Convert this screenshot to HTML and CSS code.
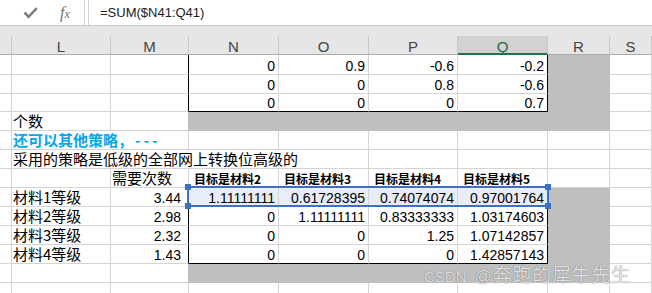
FILE: index.html
```html
<!DOCTYPE html>
<html lang="zh-CN">
<head>
<meta charset="utf-8">
<title>Sheet</title>
<link rel="stylesheet" href="styles.css">
</head>
<body>
<div class="app">
  <div class="fbar">
    <div class="fbtns">
      <svg class="check" width="15" height="12" viewBox="0 0 15 12"><polyline points="1.5,5.5 5.5,9.8 13.8,1.2" fill="none" stroke="#808080" stroke-width="2.6" stroke-linejoin="miter"/></svg>
      <span class="fx"><i class="fx-f">f</i><i class="fx-x">x</i></span>
    </div>
    <div class="fgap"></div>
    <div class="finput">=SUM($N41:Q41)</div>
  </div>

  <div class="colhdr">
    <div class="hc"></div>
    <div class="hc">L</div>
    <div class="hc">M</div>
    <div class="hc">N</div>
    <div class="hc">O</div>
    <div class="hc">P</div>
    <div class="hc act">Q</div>
    <div class="hc">R</div>
    <div class="hc">S</div>
  </div>

  <div class="sheet">
    <!-- row 1 -->
    <div class="c"></div><div class="c"></div><div class="c br"></div>
    <div class="c num">0</div><div class="c num">0.9</div><div class="c num">-0.6</div><div class="c num br">-0.2</div>
    <div class="c g"></div><div class="c"></div>
    <!-- row 2 -->
    <div class="c"></div><div class="c"></div><div class="c br"></div>
    <div class="c num">0</div><div class="c num">0</div><div class="c num">0.8</div><div class="c num br">-0.6</div>
    <div class="c g"></div><div class="c"></div>
    <!-- row 3 -->
    <div class="c"></div><div class="c"></div><div class="c br"></div>
    <div class="c num bb">0</div><div class="c num bb">0</div><div class="c num bb">0</div><div class="c num bb br">0.7</div>
    <div class="c g"></div><div class="c"></div>
    <!-- row 4 -->
    <div class="c"></div><div class="c txt">个数</div><div class="c brg"></div>
    <div class="c g"></div><div class="c g"></div><div class="c g"></div><div class="c g"></div><div class="c g"></div>
    <div class="c"></div>
    <!-- row 5 -->
    <div class="c"></div><div class="c txt cyan span2">还可以其他策略，<span class="dash">---</span></div>
    <div class="c"></div><div class="c"></div><div class="c"></div><div class="c"></div><div class="c"></div><div class="c"></div>
    <!-- row 6 -->
    <div class="c"></div><div class="c txt span4">采用的策略是低级的全部网上转换位高级的</div>
    <div class="c"></div><div class="c"></div><div class="c"></div><div class="c"></div>
    <!-- row 7 -->
    <div class="c"></div><div class="c"></div><div class="c txt">需要次数</div>
    <div class="c hd">目标是材料2</div><div class="c hd">目标是材料3</div><div class="c hd">目标是材料4</div><div class="c hd">目标是材料5</div>
    <div class="c"></div><div class="c"></div>
    <!-- row 8 -->
    <div class="c"></div><div class="c txt">材料1等级</div><div class="c num m7 br">3.44</div>
    <div class="c num sel">1.11111111</div><div class="c num sel">0.61728395</div><div class="c num sel">0.74074074</div><div class="c num sel br">0.97001764</div>
    <div class="c g"></div><div class="c"></div>
    <!-- row 9 -->
    <div class="c"></div><div class="c txt">材料2等级</div><div class="c num m7 br">2.98</div>
    <div class="c num">0</div><div class="c num">1.11111111</div><div class="c num">0.83333333</div><div class="c num br">1.03174603</div>
    <div class="c g"></div><div class="c"></div>
    <!-- row 10 -->
    <div class="c"></div><div class="c txt">材料3等级</div><div class="c num m7 br">2.32</div>
    <div class="c num">0</div><div class="c num">0</div><div class="c num">1.25</div><div class="c num br">1.07142857</div>
    <div class="c g"></div><div class="c"></div>
    <!-- row 11 -->
    <div class="c"></div><div class="c txt">材料4等级</div><div class="c num m7 br">1.43</div>
    <div class="c num bb">0</div><div class="c num bb">0</div><div class="c num bb">0</div><div class="c num bb br">1.42857143</div>
    <div class="c g"></div><div class="c"></div>
    <!-- row 12 -->
    <div class="c"></div><div class="c"></div><div class="c brg"></div>
    <div class="c g"></div><div class="c g"></div><div class="c g"></div><div class="c g"></div><div class="c g"></div>
    <div class="c"></div>
    <!-- row 13 -->
    <div class="c"></div><div class="c"></div><div class="c"></div><div class="c"></div><div class="c"></div>
    <div class="c"></div><div class="c"></div><div class="c"></div><div class="c"></div>

    <div class="refbox">
      <span class="hdl tl"></span><span class="hdl tr"></span>
      <span class="hdl bl"></span><span class="hdl br2"></span>
    </div>
  </div>

  <div class="watermark"><span class="wm-lat">CSDN</span><span class="wm-at">@</span><span class="wm-cjk">奔跑的犀牛先生</span></div>
</div>
</body>
</html>
```

FILE: styles.css
```css
html, body {
  margin: 0;
  padding: 0;
  width: 652px;
  height: 293px;
  overflow: hidden;
  background: #ffffff;
}

.app {
  position: relative;
  width: 652px;
  height: 293px;
  overflow: hidden;
  font-family: "Liberation Sans", Arial, sans-serif;
  color: #000;
}

/* formula bar */
.fbar {
  display: flex;
  height: 25px;
  border-bottom: 1px solid #c8c8c8;
  background: #fff;
}
.fbtns {
  border-right: 1px solid #d4d4d4;
  display: flex;
  align-items: center;
  padding-left: 23px;
  gap: 22px;
  width: 61px;
}
.check { display: block; margin-top: 1px; }
.fx {
  font-family: "Liberation Serif", "DejaVu Serif", serif;
  color: #6e6e6e;
  display: flex;
  align-items: baseline;
  line-height: 1;
}
.fx-f { font-size: 16px; font-style: italic; }
.fx-x { font-size: 12px; font-style: italic; }
.fgap { width: 3px; }
.finput {
  flex: 1;
  border-left: 1px solid #d4d4d4;
  padding-left: 11px;
  font-size: 13px;
  line-height: 25px;
  color: #222;
}

/* column headers */
.colhdr {
  height: 29px;
  box-sizing: border-box;
  padding-top: 10px;
  background: #e6e6e6;
  display: grid;
  grid-template-columns: 12px 99px 78px 90px 90px 89px 90px 62px 1fr;
}
.hc {
  height: 19px;
  box-sizing: border-box;
  border-right: 1px solid #c6c6c6;
  border-bottom: 1px solid #ababab;
  text-align: center;
  font-size: 15px;
  color: #444;
  padding-top: 2px;
  line-height: normal;
}
.hc.act {
  background: #d2d2d2;
  border-bottom: 2px solid #217346;
  color: #1f6b44;
}

/* sheet grid */
.sheet {
  position: relative;
  display: grid;
  grid-template-columns: 12px 99px 78px 90px 90px 89px 90px 62px 1fr;
  grid-template-rows: 20px 19px 18px repeat(10, 19px);
}
.c {
  box-sizing: border-box;
  border-right: 1px solid #d4d4d4;
  border-bottom: 1px solid #d4d4d4;
  display: flex;
  align-items: flex-end;
  white-space: nowrap;
  min-width: 0;
  overflow: visible;
}
.num {
  justify-content: flex-end;
  padding-right: 3px;
  font-family: "Liberation Sans", Arial, sans-serif;
  font-size: 14px;
  line-height: 16px;
}
.m7 { padding-right: 7px; }
.txt {
  padding-left: 1px;
  font-family: "Noto Sans CJK SC", "Noto Sans", sans-serif;
  font-size: 15px;
  line-height: 18px;
}
.cyan {
  color: #00a8ec;
  font-weight: bold;
}
.dash { letter-spacing: 3px; margin-left: 2px; }
.span2 { grid-column: span 2; }
.span4 { grid-column: span 4; }
.hd {
  padding-left: 5px;
  font-family: "Noto Sans CJK SC", "Noto Sans", sans-serif;
  font-size: 12px;
  font-weight: bold;
  line-height: 16px;
}
.g {
  background: #bfbfbf;
  border-right-color: #bfbfbf;
  border-bottom-color: #bfbfbf;
}
.br { border-right-color: #000; }
.bb { border-bottom-color: #000; }
.brg { border-right-color: #bfbfbf; }
.sel { background: #e8eef8; }

/* referenced range highlight (overlay on the grid area N:Q of row 8) */
.refbox {
  position: absolute;
  grid-column: 4 / 8;
  grid-row: 8 / 9;
  top: -2px;
  left: -2px;
  right: -1px;
  bottom: 0;
  border: 2px solid #3d6fc3;
  pointer-events: none;
  z-index: 2;
}
.hdl {
  position: absolute;
  width: 6px;
  height: 6px;
  background: #3d6fc3;
}
.hdl.tl { left: -4px; top: -4px; }
.hdl.tr { right: -4px; top: -4px; }
.hdl.bl { left: -4px; bottom: -4px; }
.hdl.br2 { right: -4px; bottom: -4px; }

/* watermark overlay */
.watermark {
  position: absolute;
  left: 424px;
  top: 263px;
  white-space: nowrap;
  color: rgba(238, 238, 238, 0.92);
  text-shadow: 0 0 1px rgba(0, 0, 0, 0.6);
  line-height: 22px;
  z-index: 3;
}
.wm-lat {
  font-family: "Liberation Sans", Arial, sans-serif;
  font-size: 15px;
  margin-right: 8px;
}
.wm-at {
  font-family: "Liberation Sans", Arial, sans-serif;
  font-size: 17px;
  margin-right: 1px;
}
.wm-cjk {
  font-family: "Noto Sans CJK SC", sans-serif;
  font-size: 19px;
  letter-spacing: 0.7px;
}
```
